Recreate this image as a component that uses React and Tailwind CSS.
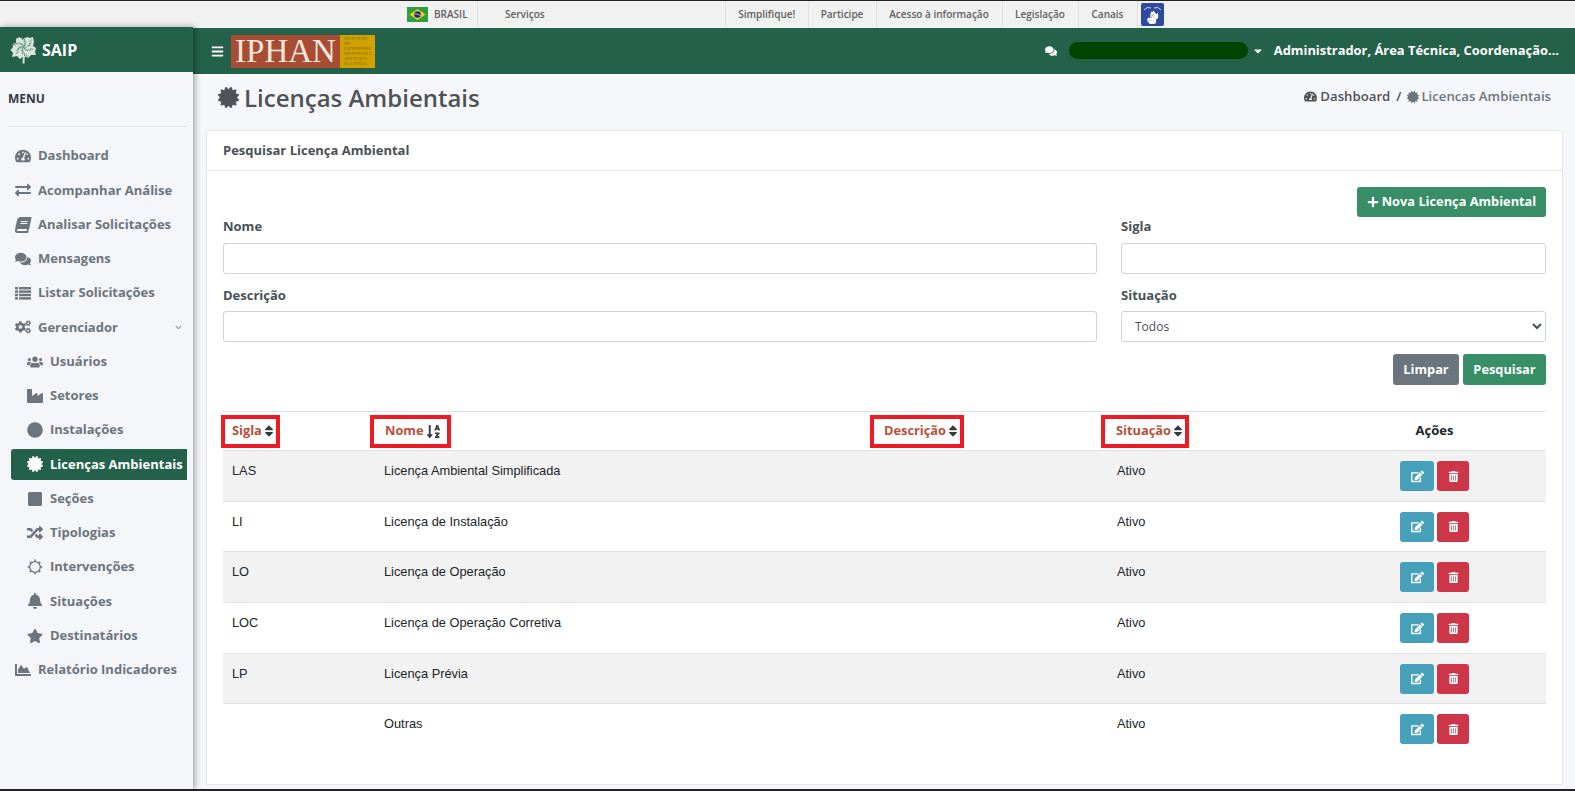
import {
  FaTachometerAlt, FaExchangeAlt, FaBook, FaComments, FaCogs, FaUsers, FaIndustry, FaCircle,
  FaCertificate, FaSquare, FaRandom, FaBell, FaStar, FaChartArea, FaSort, FaSortAlphaDown, FaBars,
  FaPlus, FaEdit, FaTrashAlt, FaCaretDown, FaChevronDown, FaSignLanguage,
} from "react-icons/fa";

function ListIcon({ className }) {
  return (
    <svg className={className} width="1em" height="1em" viewBox="0 0 16 16" fill="currentColor">
      {[2, 5.4, 8.8, 12.2].map((y) => (
        <g key={y}>
          <rect x="0" y={y} width="3" height="2.4" />
          <rect x="4" y={y} width="12" height="2.4" />
        </g>
      ))}
    </svg>
  );
}

function BookIcon({ className }) {
  return <FaBook className={`${className} -skew-x-12`} />;
}

function RingIcon({ className }) {
  const ticks = [0, 45, 90, 135, 180, 225, 270, 315];
  return (
    <svg className={className} width="1em" height="1em" viewBox="0 0 16 16" fill="none" stroke="currentColor">
      <circle cx="8" cy="8" r="5.3" strokeWidth="1.3" />
      {ticks.map((a) => (
        <line key={a} x1="8" y1="0.6" x2="8" y2="2.6" strokeWidth="1.5" transform={`rotate(${a} 8 8)`} />
      ))}
    </svg>
  );
}

const menu = [
  { label: "Dashboard", Icon: FaTachometerAlt },
  { label: "Acompanhar Análise", Icon: FaExchangeAlt },
  { label: "Analisar Solicitações", Icon: BookIcon },
  { label: "Mensagens", Icon: FaComments },
  { label: "Listar Solicitações", Icon: ListIcon },
  { label: "Gerenciador", Icon: FaCogs, arrow: true },
  { label: "Usuários", Icon: FaUsers, sub: true },
  { label: "Setores", Icon: FaIndustry, sub: true },
  { label: "Instalações", Icon: FaCircle, sub: true },
  { label: "Licenças Ambientais", Icon: FaCertificate, sub: true, active: true },
  { label: "Seções", Icon: FaSquare, sub: true },
  { label: "Tipologias", Icon: FaRandom, sub: true },
  { label: "Intervenções", Icon: RingIcon, sub: true },
  { label: "Situações", Icon: FaBell, sub: true },
  { label: "Destinatários", Icon: FaStar, sub: true },
  { label: "Relatório Indicadores", Icon: FaChartArea },
];

const rows = [
  ["LAS", "Licença Ambiental Simplificada"],
  ["LI", "Licença de Instalação"],
  ["LO", "Licença de Operação"],
  ["LOC", "Licença de Operação Corretiva"],
  ["LP", "Licença Prévia"],
  ["", "Outras"],
];

const govLinks = [
  ["Simplifique!", "w-[82.5px]"],
  ["Participe", "w-[68px]"],
  ["Acesso à informação", "w-[126px]"],
  ["Legislação", "w-[76px]"],
  ["Canais", "w-[59px]"],
];

function Flag() {
  return (
    <svg width="21" height="15" viewBox="0 0 21 15">
      <rect width="21" height="15" fill="#2f9e41" />
      <path d="M10.5 2 L18.5 7.5 L10.5 13 L2.5 7.5 Z" fill="#f4d01c" />
      <circle cx="10.5" cy="7.5" r="3.3" fill="#1b2a78" />
      <path d="M7.4 6.8 Q10.5 6.6 13.6 8.6" stroke="#fff" strokeWidth="0.7" fill="none" />
    </svg>
  );
}

// copa da arvore do logo: contorno irregular com nervuras por cima
function Leaf() {
  const veins = [];
  for (let i = 0; i < 26; i++) {
    const a = (i / 26) * Math.PI * 2;
    const r = 3 + ((i * 7) % 9);
    veins.push(
      <line
        key={i}
        x1={13.5 + Math.cos(a) * (r - 3)}
        y1={11 + Math.sin(a) * (r - 3)}
        x2={13.5 + Math.cos(a) * r}
        y2={11 + Math.sin(a) * r}
        stroke="#24614a"
        strokeWidth="0.7"
      />
    );
  }
  return (
    <svg width="27" height="28" viewBox="0 0 27 28">
      <path d="M12.5 27.5 L13 16 L15 16 L14.5 27.5 Z" fill="#cfe0d6" />
      <path
        d="M9 1 L13 3 L17 1 L20 2 L23 1 L24 6 L23 10 L26 12 L25 16 L26 19 L21 19 L18 22 L14 20 L10 23 L7 20 L2 21 L3 17 L0.5 14 L3 11 L2.5 8 L6 7 L6 3 Z"
        fill="#d7e4dc"
      />
      {veins}
    </svg>
  );
}

function Logo() {
  return (
    <div className="flex h-[33px] w-[144px] ml-[7px]">
      <div className="w-[109px] bg-[#a84d33] flex items-center justify-center">
        <span className="font-['Liberation_Serif',serif] text-[33px] leading-none text-[#f3e6dc]">IPHAN</span>
      </div>
      <div className="flex-1 bg-[#d0a200] flex flex-col justify-center pl-[4px]">
        {["INSTITUTO DO", "PATRIMÔNIO", "HISTÓRICO E", "ARTÍSTICO", "NACIONAL"].map((t) => (
          <span key={t} className="font-['Liberation_Serif',serif] text-[4px] leading-[5px] tracking-[0.3px] text-[#7a5a10]">{t}</span>
        ))}
      </div>
    </div>
  );
}

function Field({ label, select }) {
  return (
    <div>
      <div className="text-[13px] font-bold text-[#495057] leading-[20px] mb-[6.5px]">{label}</div>
      {select ? (
        <select className="w-full h-[31px] border border-[#ced4da] rounded-[3px] bg-white text-[12px] text-[#495057] pl-[9px] font-['Open_Sans',sans-serif]">
          <option>Todos</option>
        </select>
      ) : (
        <input className="block w-full h-[31px] border border-[#ced4da] rounded-[3px] bg-white" />
      )}
    </div>
  );
}

function SortHead({ label, className, sortIcon }) {
  return (
    <div className={className}>
      <span className="inline-flex items-center h-[33px] border-[4px] border-[#ed1c24] text-[#b8503a] font-bold text-[12.8px]">
        {label}
        {sortIcon || <FaSort className="text-[#343a40] text-[14px]" />}
      </span>
    </div>
  );
}

export default function App() {
  return (
    <div className="h-[791px] w-[1575px] overflow-hidden bg-[#f5f7fb] font-['Open_Sans',sans-serif] flex flex-col border-t border-b-2 border-[#222222]">
      {/* barra do governo */}
      <div className="h-[27px] shrink-0 bg-[#f1f1f1] flex items-center text-[10px] font-semibold text-[#606060]">
        <div className="w-[407px]" />
        <Flag />
        <span className="ml-[6px] w-[44px] h-full flex items-center border-r border-[#e2e2e2] whitespace-nowrap">BRASIL</span>
        <span className="ml-[27px] w-[221px] h-full flex items-center border-r border-[#e2e2e2]">Serviços</span>
        {govLinks.map(([t, w]) => (
          <span key={t} className={`${w} h-full flex items-center justify-center border-r border-[#e2e2e2] whitespace-nowrap`}>{t}</span>
        ))}
        <div className="ml-[3px] w-[23px] h-[23px] rounded-[2px] bg-[#2d4a9e] flex flex-col items-center justify-center">
          <svg width="19" height="5" viewBox="0 0 19 5" fill="none" stroke="#fff" strokeWidth="0.8">
            <path d="M1 4 Q4 0 8 2" />
            <path d="M11 2 Q15 0 18 4" />
          </svg>
          <FaSignLanguage className="text-white text-[13px]" />
        </div>
      </div>

      <div className="flex flex-1 min-h-0">
        {/* sidebar */}
        <aside className="w-[193px] shrink-0 z-10 -mt-px bg-[#f5f6fa] shadow-[2px_0_6px_rgba(0,0,0,0.35)] flex flex-col">
          <div className="h-[45px] bg-[#24614a] flex items-center pl-[10px] gap-[5px] text-white font-bold text-[16px]">
            <Leaf />
            SAIP
          </div>
          <div className="mx-[8px] mr-[6px] h-[55px] border-b border-[#e4e6ee] flex items-center text-[12px] font-bold text-[#343a40]">MENU</div>
          <nav className="mt-[13.5px] flex flex-col">
            {menu.map(({ label, Icon, sub, active, arrow }) => (
              <div
                key={label}
                className={`h-[31px] mb-[3.25px] flex items-center text-[13px] font-bold ${sub ? "pl-[26px]" : "pl-[14px]"} ${active ? "ml-[11px] mr-[6px] !pl-[15px] rounded-l-[3px] bg-[#24614a] text-white" : "text-[#6c757d]"}`}
              >
                <span className="w-[17px] flex justify-center shrink-0"><Icon className="text-[16px]" /></span>
                <span className="ml-[7px] whitespace-nowrap">{label}</span>
                {arrow && <FaChevronDown className="ml-auto mr-[11px] text-[7px] text-[#8a929a]" />}
              </div>
            ))}
          </nav>
        </aside>

        <div className="flex-1 min-w-0 flex flex-col">
          {/* topo */}
          <header className="h-[46px] shrink-0 bg-[#24614a] flex items-center text-white">
            <FaBars className="ml-[18px] text-[13px]" />
            <Logo />
            <div className="ml-auto flex items-center pr-[16px]">
              <FaComments className="text-[12px]" />
              <div className="ml-[12px] w-[179px] h-[17px] rounded-full bg-[#004400]" />
              <FaCaretDown className="ml-[4px] text-[12px]" />
              <span className="ml-[10px] text-[12.9px] font-bold whitespace-nowrap">Administrador, Área Técnica, Coordenação...</span>
            </div>
          </header>

          {/* titulo e breadcrumb */}
          <div className="h-[56px] shrink-0 flex items-center justify-between pl-[25px] pr-[24px]">
            <h1 className="flex items-center gap-[5px] text-[24px] font-semibold text-[#4f5256] mt-[-9px]">
              <FaCertificate className="text-[21px]" />
              Licenças Ambientais
            </h1>
            <div className="flex items-center text-[13.2px] font-semibold mb-[10px] text-[#4f5256]">
              <FaTachometerAlt className="text-[13px] mr-[3px]" />
              Dashboard
              <span className="mx-[6px]">/</span>
              <span className="flex items-center text-[#6c757d]"><FaCertificate className="text-[12px] mr-[2px]" />Licencas Ambientais</span>
            </div>
          </div>

          {/* card */}
          <section className="ml-[13px] mr-[12px] mb-[4px] bg-white border border-[#e3e6ec] rounded-t-[3px] flex-1 min-h-0">
            <div className="h-[40px] border-b border-[#e3e6ec] flex items-center pl-[16px] text-[13px] font-bold text-[#495057]">
              Pesquisar Licença Ambiental
            </div>
            <div className="px-[16px]">
              <div className="flex justify-end pt-[16px]">
                <button className="h-[30px] w-[189px] flex items-center justify-center gap-[3px] rounded-[3px] bg-[#388e66] text-white text-[12.8px] font-bold">
                  <FaPlus className="text-[12px]" />
                  Nova Licença Ambiental
                </button>
              </div>
              <div className="grid grid-cols-[874px_425px] gap-x-[24px] gap-y-[11px] mt-[-1px]">
                <Field label="Nome" />
                <Field label="Sigla" />
                <Field label="Descrição" />
                <Field label="Situação" select />
              </div>
              <div className="flex justify-end gap-[4px] mt-[12px]">
                <button className="h-[31px] w-[66px] rounded-[3px] bg-[#6c757d] text-white text-[12.8px] font-bold">Limpar</button>
                <button className="h-[31px] w-[83px] rounded-[3px] bg-[#388e66] text-white text-[12.8px] font-bold">Pesquisar</button>
              </div>

              {/* tabela */}
              <div className="mt-[26px] border-t border-[#dee2e6]">
                <div className="h-[39px] flex items-center border-b border-[#dee2e6]">
                  <SortHead label={<span className="pl-[7px]">Sigla</span>} className="w-[149px] ml-[-2px]" />
                  <SortHead label={<span className="pl-[11px]">Nome</span>} sortIcon={<FaSortAlphaDown className="text-[#343a40] text-[15px] ml-[3px] mr-[6px]" />} className="w-[500px]" />
                  <SortHead label={<span className="pl-[10px]">Descrição</span>} className="w-[231px]" />
                  <SortHead label={<span className="pl-[11px]">Situação</span>} className="w-[301.5px]" />
                  <div className="w-[64px] text-center text-[13px] font-bold text-[#212529]">Ações</div>
                </div>
                {rows.map(([sigla, nome], i) => (
                  <div key={nome} className={`flex text-[12.8px] text-[#212529] font-['Liberation_Sans',sans-serif] ${i % 2 === 0 ? "bg-[#f2f2f2]" : "bg-white"} ${i === 5 ? "h-[78px]" : "h-[50.7px] border-b border-[#dee2e6]"}`}>
                    <div className="w-[161px] pl-[9px] pt-[10px]">{sigla}</div>
                    <div className="w-[733px] pt-[10px]">{nome}</div>
                    <div className="w-[283px] pt-[10px]">Ativo</div>
                    <div className="flex gap-[3px] pt-[10px] h-fit">
                      <button className="w-[34px] h-[30px] rounded-[3px] bg-[#47a0b9] text-white flex items-center justify-center"><FaEdit className="text-[13px]" /></button>
                      <button className="w-[32px] h-[30px] rounded-[3px] bg-[#cd3549] text-white flex items-center justify-center"><FaTrashAlt className="text-[11px]" /></button>
                    </div>
                  </div>
                ))}
              </div>
            </div>
          </section>
        </div>
      </div>
    </div>
  );
}
